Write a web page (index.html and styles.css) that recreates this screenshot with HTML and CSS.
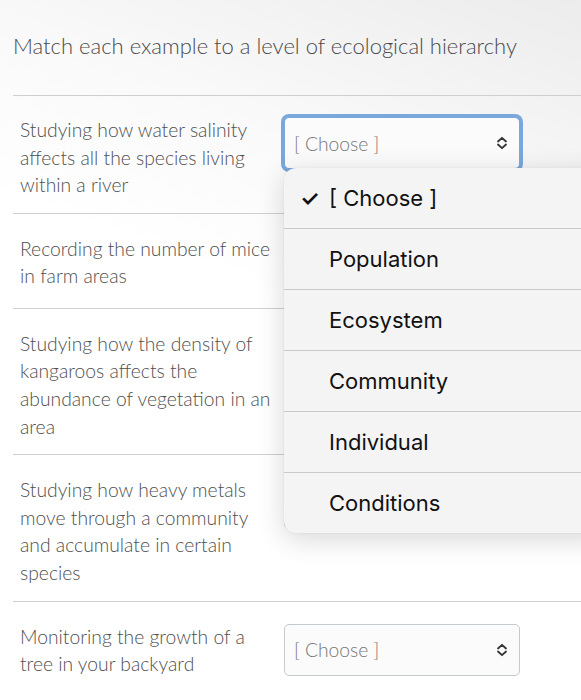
FILE: index.html
```html
<!DOCTYPE html>
<html lang="en">
<head>
    <meta charset="UTF-8">
    <meta name="viewport" content="width=device-width, initial-scale=1.0">
    <title>Ecological Hierarchy</title>
    <link rel="stylesheet" href="styles.css">
</head>
<body>
    <div class="question">
        <p class="prompt">Match each example to a level of ecological hierarchy</p>

        <div class="answers">
            <div class="answer-row">
                <div class="answer-text">Studying how water salinity<br>affects all the species living<br>within a river</div>
                <div class="select-box focused">
                    <span>[ Choose ]</span>
                    <svg class="chevron" width="12" height="14" viewBox="0 0 12 14"><path d="M2 5.5 L6 1.8 L10 5.5 M2 8.5 L6 12.2 L10 8.5" fill="none" stroke="#333" stroke-width="1.8" stroke-linecap="round" stroke-linejoin="round"/></svg>
                </div>
            </div>
            <div class="answer-row">
                <div class="answer-text">Recording the number of mice<br>in farm areas</div>
                <div class="select-box">
                    <span>[ Choose ]</span>
                    <svg class="chevron" width="12" height="14" viewBox="0 0 12 14"><path d="M2 5.5 L6 1.8 L10 5.5 M2 8.5 L6 12.2 L10 8.5" fill="none" stroke="#333" stroke-width="1.8" stroke-linecap="round" stroke-linejoin="round"/></svg>
                </div>
            </div>
            <div class="answer-row">
                <div class="answer-text">Studying how the density of<br>kangaroos affects the<br>abundance of vegetation in an<br>area</div>
                <div class="select-box">
                    <span>[ Choose ]</span>
                    <svg class="chevron" width="12" height="14" viewBox="0 0 12 14"><path d="M2 5.5 L6 1.8 L10 5.5 M2 8.5 L6 12.2 L10 8.5" fill="none" stroke="#333" stroke-width="1.8" stroke-linecap="round" stroke-linejoin="round"/></svg>
                </div>
            </div>
            <div class="answer-row">
                <div class="answer-text">Studying how heavy metals<br>move through a community<br>and accumulate in certain<br>species</div>
                <div class="select-box">
                    <span>[ Choose ]</span>
                    <svg class="chevron" width="12" height="14" viewBox="0 0 12 14"><path d="M2 5.5 L6 1.8 L10 5.5 M2 8.5 L6 12.2 L10 8.5" fill="none" stroke="#333" stroke-width="1.8" stroke-linecap="round" stroke-linejoin="round"/></svg>
                </div>
            </div>
            <div class="answer-row">
                <div class="answer-text">Monitoring the growth of a<br>tree in your backyard</div>
                <div class="select-box">
                    <span>[ Choose ]</span>
                    <svg class="chevron" width="12" height="14" viewBox="0 0 12 14"><path d="M2 5.5 L6 1.8 L10 5.5 M2 8.5 L6 12.2 L10 8.5" fill="none" stroke="#333" stroke-width="1.8" stroke-linecap="round" stroke-linejoin="round"/></svg>
                </div>
            </div>
        </div>
    </div>

    <ul class="picker">
        <li class="checked"><span class="tick">&#10003;</span>[ Choose ]</li>
        <li>Population</li>
        <li>Ecosystem</li>
        <li>Community</li>
        <li>Individual</li>
        <li>Conditions</li>
    </ul>
</body>
</html>
```

FILE: styles.css
```css
    body {
        margin: 0;
        background: linear-gradient(200deg, #ececec 0%, #f9f9f9 25%, #ffffff 45%);
        font-family: Lato, 'Open Sans', sans-serif;
        min-height: 700px;
        position: relative;
        overflow: hidden;
    }
    .question {
        padding-left: 13px;
    }
    .prompt {
        margin: 0;
        padding-top: 31px;
        font-size: 22px;
        font-weight: 300;
        color: #4a4a4a;
        line-height: 30px;
        height: 64px;
        border-bottom: 1px solid #cfcfcf;
    }
    .answer-row {
        display: flex;
        align-items: flex-start;
        padding: 20px 0 14px 7px;
        border-bottom: 1px solid #cfcfcf;
    }
    .answer-row + .answer-row {
        padding-top: 21px;
    }
    .answer-row:last-child {
        border-bottom: none;
    }
    .answer-text {
        width: 264px;
        flex-shrink: 0;
        font-size: 19.3px;
        font-weight: 300;
        line-height: 27.6px;
        color: #4f4f4f;
    }
    .select-box {
        width: 236px;
        height: 52px;
        box-sizing: border-box;
        margin: 1px 0 6px;
        border: 1px solid #c5cacf;
        border-radius: 5px;
        background-color: #fbfbfb;
        display: flex;
        align-items: center;
        justify-content: space-between;
        padding: 0 11px 0 9px;
        font-size: 19.3px;
        font-weight: 300;
        color: #777;
    }
    .select-box.focused {
        box-shadow: 0 0 0 3px #7aa7dc;
        border-color: #7aa7dc;
    }
    .picker {
        position: absolute;
        left: 284px;
        top: 168px;
        width: 330px;
        margin: 0;
        padding: 0;
        background-color: #f4f4f4;
        border-radius: 12px;
        box-shadow: 0 6px 28px rgba(0, 0, 0, 0.16), 0 0 2px rgba(0, 0, 0, 0.08);
        font-family: Inter, 'Liberation Sans', sans-serif;
        font-size: 22px;
        color: #111;
        overflow: hidden;
    }
    .picker li {
        list-style: none;
        height: 60px;
        line-height: 60px;
        padding-left: 45px;
        border-top: 1px solid #c9c9c9;
    }
    .picker li.checked {
        border-top: none;
    }
    .tick {
        display: inline-block;
        width: 29px;
        margin-left: -29px;
        font-weight: 600;
    }
```
